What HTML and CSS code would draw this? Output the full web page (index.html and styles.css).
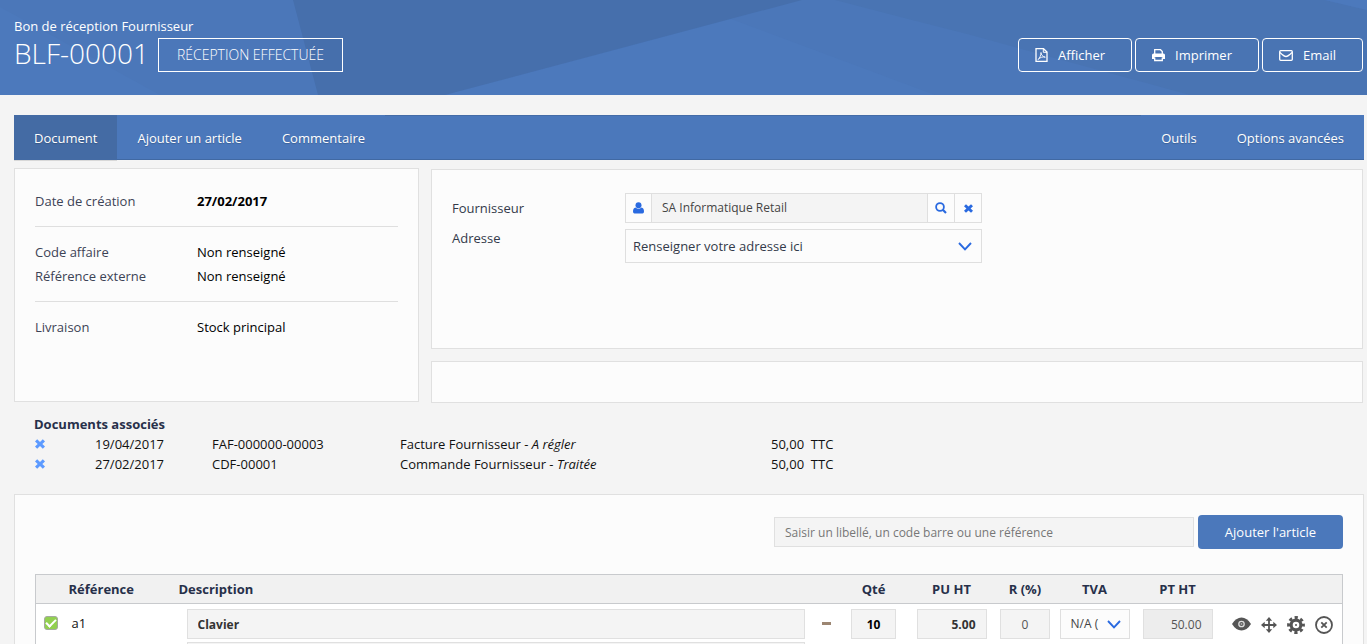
FILE: index.html
```html
<!DOCTYPE html>
<html lang="fr">
<head>
<meta charset="utf-8">
<title>BLF-00001 - Bon de réception Fournisseur</title>
<link rel="stylesheet" href="styles.css">
</head>
<body>
<svg class="sprite" aria-hidden="true">
  <symbol id="i-cross" viewBox="0 0 10 10"><path d="M2.200 0.300 5 2.900 7.800 0.300 10 2.400 7.300 5 10 7.600 7.800 9.700 5 7.100 2.200 9.700 0 7.600 2.700 5 0 2.400Z" fill="currentColor"/></symbol>
  <symbol id="i-chevron" viewBox="0 0 14 9"><path d="M1 1 7 7.300 13 1" fill="none" stroke="currentColor" stroke-width="1.900"/></symbol>
</svg>

<header class="hero">
  <svg class="hero-art" viewBox="0 0 1367 95" preserveAspectRatio="none" aria-hidden="true">
    <path d="M0 7 160 95H0Z" fill="#4c79bc"/>
    <path d="M802 0 456 92 445 95H520L935 95 731 19Z" fill="#4c79bc"/>
    <path d="M293 0H802L456 92 445 95H318Z" fill="#466fac"/>
    <path d="M835 0H1325L1367 10V95H1190L967 34 912 20Z" fill="#4974b3"/>
    <path d="M1325 0H1367V10Z" fill="#4c79bc"/>
  </svg>
  <div class="hero-title">
    <p class="kind">Bon de réception Fournisseur</p>
    <div class="title-line">
      <h1>BLF-00001</h1>
      <span class="status">RÉCEPTION EFFECTUÉE</span>
    </div>
  </div>
  <div class="hero-actions">
    <button class="ghost" type="button">
      <svg width="13" height="14" viewBox="0 0 13 14" fill="none" stroke="currentColor"><path d="M1 .700H8.500L12 4V13.300H1Z" stroke-width="1.300"/><path d="M8.300 1V4.300H12" /><path d="M3 11.500C4.500 10.500 6 7.500 6 4.500 6 6.500 7.500 8.700 10.300 9.200 8 8.600 5.500 9 3 11.500" stroke-width=".9"/></svg>
      <span>Afficher</span>
    </button>
    <button class="ghost" type="button">
      <svg width="13" height="14" viewBox="0 0 13 14"><path d="M2.700 6V1.700H8.500L10.300 3.500V6" fill="none" stroke="currentColor" stroke-width="1.300"/><path d="M1.500 5.500H11.500Q13 5.500 13 7V11H10.500V9H2.500V11H0V7Q0 5.500 1.500 5.500Z" fill="currentColor"/><path d="M2.700 9.500V12.500H10.300V9.500" fill="none" stroke="currentColor" stroke-width="1.300"/></svg>
      <span>Imprimer</span>
    </button>
    <button class="ghost" type="button">
      <svg width="14" height="14" viewBox="0 0 14 14" fill="none" stroke="currentColor" stroke-width="1.300"><rect x=".7" y="2.700" width="12.600" height="9.600" rx="1"/><path d="M1 4.500C3 6.500 5.500 8.500 7 8.500S11 6.500 13 4.500"/></svg>
      <span>Email</span>
    </button>
  </div>
</header>

<main class="page">
  <nav class="tabs">
    <a class="active" href="#document">Document</a>
    <a href="#article">Ajouter un article</a>
    <a href="#commentaire">Commentaire</a>
    <span class="filler"></span>
    <a href="#outils">Outils</a>
    <a href="#options">Options avancées</a>
  </nav>

  <div class="columns">
    <section class="card summary">
      <dl>
        <div><dt>Date de création</dt><dd><b>27/02/2017</b></dd></div>
      </dl>
      <hr>
      <dl>
        <div><dt>Code affaire</dt><dd>Non renseigné</dd></div>
        <div><dt>Référence externe</dt><dd>Non renseigné</dd></div>
      </dl>
      <hr>
      <dl>
        <div><dt>Livraison</dt><dd>Stock principal</dd></div>
      </dl>
    </section>
    <div class="side">
      <section class="card supplier">
        <div class="field">
          <label for="supplier">Fournisseur</label>
          <div class="group">
            <span class="addon"><svg width="11" height="12" viewBox="0 0 11 12" fill="currentColor"><circle cx="5.500" cy="3.200" r="3"/><path d="M2.500 5.500Q5.500 8 8.500 5.500 11 6 11 9.500 11 11.500 9.500 11.500H1.500Q0 11.500 0 9.500 0 6 2.500 5.500Z"/></svg></span>
            <input id="supplier" type="text" value="SA Informatique Retail" readonly>
            <button type="button" aria-label="Rechercher"><svg width="12" height="12" viewBox="0 0 12 12" fill="none" stroke="currentColor" stroke-width="1.800"><circle cx="5" cy="5" r="3.900"/><path d="M7.800 7.800 11 11" stroke-width="2.200"/></svg></button>
            <button type="button" aria-label="Effacer"><svg width="9" height="9"><use href="#i-cross"/></svg></button>
          </div>
        </div>
        <div class="field top">
          <label for="address">Adresse</label>
          <div class="select">
            <select id="address"><option>Renseigner votre adresse ici</option></select>
            <svg width="14" height="9"><use href="#i-chevron"/></svg>
          </div>
        </div>
      </section>
      <section class="card blank"></section>
    </div>
  </div>

  <section class="linked">
    <h2>Documents associés</h2>
    <table>
      <colgroup><col class="l-del"><col class="l-date"><col class="l-ref"><col class="l-type"><col></colgroup>
      <tr>
        <td><button type="button" aria-label="Dissocier"><svg width="10" height="10"><use href="#i-cross"/></svg></button></td>
        <td>19/04/2017</td><td>FAF-000000-00003</td><td>Facture Fournisseur - <i>A régler</i></td><td>50,00 &nbsp;TTC</td>
      </tr>
      <tr>
        <td><button type="button" aria-label="Dissocier"><svg width="10" height="10"><use href="#i-cross"/></svg></button></td>
        <td>27/02/2017</td><td>CDF-00001</td><td>Commande Fournisseur - <i>Traitée</i></td><td>50,00 &nbsp;TTC</td>
      </tr>
    </table>
  </section>

  <section class="card articles">
    <form class="add">
      <input type="text" aria-label="Article" placeholder="Saisir un libellé, un code barre ou une référence">
      <button type="button">Ajouter l'article</button>
    </form>
    <table class="lines">
      <colgroup><col class="c-check"><col class="c-ref"><col><col class="c-dash"><col class="c-qty"><col class="c-pu"><col class="c-r"><col class="c-tva"><col class="c-pt"><col class="c-act"></colgroup>
      <thead>
        <tr><th></th><th class="left">Référence</th><th class="left">Description</th><th></th><th>Qté</th><th>PU HT</th><th>R (%)</th><th>TVA</th><th>PT HT</th><th></th></tr>
      </thead>
      <tbody>
        <tr>
          <td class="mid"><input class="tick" type="checkbox" aria-label="Ligne a1" checked></td>
          <td class="ref">a1</td>
          <td class="desc">
            <input class="box strong" type="text" aria-label="Libellé" value="Clavier">
            <textarea class="box" aria-label="Détail"></textarea>
          </td>
          <td class="mid"><span class="dash"></span></td>
          <td><input class="box qty" type="text" aria-label="Quantité" value="10"></td>
          <td><input class="box amount strong" type="text" aria-label="Prix unitaire HT" value="5.00"></td>
          <td><input class="box rate" type="text" aria-label="Remise" value="0"></td>
          <td>
            <div class="select small">
              <select aria-label="TVA"><option>N/A (</option></select>
              <svg width="14" height="9"><use href="#i-chevron"/></svg>
            </div>
          </td>
          <td><input class="box amount total" type="text" aria-label="Prix total HT" value="50.00" readonly></td>
          <td>
            <div class="tools">
              <button type="button" aria-label="Voir"><svg width="19" height="18" viewBox="0 0 19 18"><path d="M0 8Q4 1.500 9.500 1.500T19 8Q15 14.500 9.500 14.500T0 8Z" fill="currentColor"/><circle cx="9.500" cy="8" r="2.700" fill="none" stroke="#ddd" stroke-width="1.300"/><circle cx="9.500" cy="8" r="1" fill="#aaa"/></svg></button>
              <button type="button" aria-label="Déplacer"><svg width="16" height="18" viewBox="0 0 16 18"><path d="M8 3V15M2 9H14" stroke="currentColor" stroke-width="1.800"/><path d="M8 1 11.200 4.700H4.800ZM8 17 4.800 13.300H11.200ZM0 9 3.700 5.800V12.200ZM16 9 12.300 12.200V5.800Z" fill="currentColor"/></svg></button>
              <button type="button" aria-label="Paramètres"><svg width="18" height="18" viewBox="0 0 18 18" fill="none" stroke="currentColor"><circle cx="9" cy="9" r="4.900" stroke-width="3.200"/><circle cx="9" cy="9" r="7.400" stroke-width="3" stroke-dasharray="3.200 2.611" stroke-dashoffset="1.600"/><circle cx="9" cy="9" r="1" fill="currentColor" stroke="none"/></svg></button>
              <button type="button" aria-label="Supprimer"><svg width="18" height="18" viewBox="0 0 18 18" fill="none" stroke="currentColor" stroke-width="1.800"><circle cx="9" cy="9" r="8"/><path d="M6.300 6.300 11.700 11.700M11.700 6.300 6.300 11.700"/></svg></button>
            </div>
          </td>
        </tr>
      </tbody>
    </table>
  </section>
</main>
</body>
</html>
```

FILE: styles.css
```css
* { box-sizing: border-box; }

body {
  margin: 0;
  height: 100vh;
  overflow: hidden;
  background: #f4f4f4;
  color: #111;
  font: 13px/20px "Open Sans", "Noto Sans", sans-serif;
}

button, input, select, textarea { font: inherit; color: inherit; margin: 0; border-radius: 0; }
button { padding: 0; border: 0; background: none; }
svg { display: block; flex: none; }
.sprite { position: absolute; width: 0; height: 0; }
table { border-collapse: collapse; table-layout: fixed; width: 100%; }
td, th { padding: 0; }

/* Header band */
.hero {
  position: relative;
  display: flex;
  justify-content: space-between;
  align-items: flex-start;
  padding: 16px 4px 23px 14px;
  background: #4b77b9;
  color: #fff;
}
.hero-art { position: absolute; inset: 0; width: 100%; height: 100%; }
.hero-title, .hero-actions { position: relative; }
.kind { margin: 0 0 2px; line-height: 20px; }
.title-line { display: flex; align-items: flex-start; gap: 9px; }
h1 { margin: 0; font-size: 28px; line-height: 30px; font-weight: 300; }
.status {
  padding: 0 18px;
  border: 1px solid #fff;
  font-size: 14px;
  line-height: 32px;
  font-weight: 300;
}
.hero-actions { display: flex; gap: 3px; padding-top: 22px; }
.ghost {
  display: flex;
  align-items: center;
  gap: 10px;
  height: 34px;
  padding: 0 26px 0 16px;
  border: 1px solid #fff;
  border-radius: 4px;
}

/* Tabs */
.page { padding: 20px 3px 0 14px; }
.tabs {
  display: flex;
  background: #4b78bb;
  box-shadow: inset 0 -1px #4169a3;
}
.tabs a {
  padding: 1px 20px 0;
  line-height: 44px;
  height: 45px;
  color: #fff;
  text-decoration: none;
  text-shadow: 0 1px 1px rgba(0, 0, 0, .2);
}
.tabs .active { background: #446ba4; box-shadow: 0 1px #d8d8d8; }
.filler { flex: 1; box-shadow: inset 0 1px #446ca7; }

/* Cards */
.card { border: 1px solid #e0e0e0; background: #fcfcfc; }
.columns { display: flex; align-items: flex-start; gap: 12px; padding: 8px 1px 0 0; }
.summary { width: 405px; min-height: 234px; padding: 20px; }
.summary dl { margin: 0; line-height: 24px; }
.summary dl div { display: flex; }
.summary dt { width: 162px; color: #3c4356; }
.summary dd { margin: 0; color: #000; }
.summary hr { margin: 13px 0; border: 0; border-top: 1px solid #dfdfdf; }
.side { flex: 1; display: flex; flex-direction: column; gap: 12px; padding-top: 1px; }
.supplier { min-height: 180px; padding: 23px 20px; display: flex; flex-direction: column; gap: 6px; }
.blank { min-height: 42px; }

.field { display: flex; align-items: center; color: #333a4a; }
.field.top { align-items: flex-start; }
.field label { width: 173px; }
.field.top label { line-height: 18px; }
.group, .field .select { width: 357px; }
.group { display: flex; height: 30px; border: 1px solid #dfdfdf; color: #2a6ae0; }
.addon, .group button { display: flex; align-items: center; justify-content: center; width: 25px; }
.group button { width: 27px; border-left: 1px solid #dfdfdf; }
.group input {
  flex: 1;
  min-width: 0;
  padding: 0 10px;
  border: 0;
  border-left: 1px solid #dfdfdf;
  background: #f4f4f4;
  color: #444;
  font-size: 12px;
}
.select { display: grid; align-items: center; }
.select select {
  grid-area: 1 / 1;
  appearance: none;
  width: 100%;
  height: 34px;
  padding: 0 7px;
  border: 1px solid #dfdfdf;
  background: #fcfcfc;
}
.select svg { grid-area: 1 / 1; justify-self: end; margin-right: 10px; color: #2a6ae0; pointer-events: none; }

/* Linked documents */
.linked { padding: 11px 20px 20px; }
.linked h2 { margin: 0; color: #27304a; font-size: 13px; line-height: 20px; font-weight: 700; }
.linked td { height: 20px; white-space: nowrap; }
.linked button { display: block; padding-left: 1px; color: #5c9aff; }
.l-del { width: 61px; }
.l-date { width: 117px; }
.l-ref { width: 188px; }
.l-type { width: 371px; }

/* Article lines */
.articles { padding: 20px; }
.add { display: flex; justify-content: flex-end; align-items: center; gap: 4px; padding-bottom: 25px; }
.add input {
  width: 420px;
  height: 30px;
  padding: 0 10px;
  border: 1px solid #e0e0e0;
  background: #f4f4f4;
  font-size: 12px;
}
.add input::placeholder { color: #777; opacity: 1; }
.add button { height: 34px; width: 145px; border-radius: 4px; background: #4b78bb; color: #fff; }

.lines { border: 1px solid #c8cacd; background: #fff; }
.lines thead tr { height: 29px; background: #f1f1f1; border-bottom: 1px solid #c8cacd; color: #27304a; }
.lines th { font-weight: 700; text-align: center; }
.lines .left { text-align: left; }
.lines td { padding: 5px 0; vertical-align: top; text-align: center; }
.lines .ref { padding: 9px 3px; text-align: left; }
.lines .desc { padding: 5px 8px; }
.lines .mid { padding-top: 12px; }
.c-check { width: 33px; }
.c-ref { width: 110px; }
.c-dash { width: 27px; }
.c-qty { width: 68px; }
.c-pu { width: 88px; }
.c-r { width: 59px; }
.c-tva { width: 80px; }
.c-pt { width: 86px; }
.c-act { width: 122px; }

.box {
  display: block;
  width: 100%;
  height: 30px;
  margin: 0 auto;
  padding: 0 10px;
  border: 1px solid #e0e0e0;
  background: #f4f4f4;
  color: #333;
  font-size: 12px;
}
textarea.box { height: 60px; margin-top: 3px; resize: none; }
.strong, .qty { font-weight: 700; }
.qty { width: 45px; padding: 0; text-align: center; color: #000; }
.rate { width: 50px; padding: 0; text-align: center; color: #555; }
.amount { width: 70px; text-align: right; }
.total { background: #ededed; color: #555; }
.small { width: 70px; margin: 0 auto; }
.small select { height: 30px; padding: 0 10px; font-size: 12px; color: #444; }
.small svg { margin-right: 9px; }
.dash { display: block; width: 9px; height: 3px; margin: 6px auto; background: #9c8672; }

.tick {
  appearance: none;
  display: grid;
  place-items: center;
  width: 14px;
  height: 14px;
  margin-left: 8px;
  border: 1px solid #a5aaa0;
  border-radius: 3px;
  background: #92d050;
}
.tick:checked::before {
  content: "";
  width: 8px;
  height: 4px;
  margin-bottom: 3px;
  border: solid #fff;
  border-width: 0 0 2px 2px;
  transform: rotate(-45deg);
}

.tools { display: flex; align-items: center; justify-content: flex-end; gap: 10px; height: 32px; padding-right: 9px; color: #555; }
```
